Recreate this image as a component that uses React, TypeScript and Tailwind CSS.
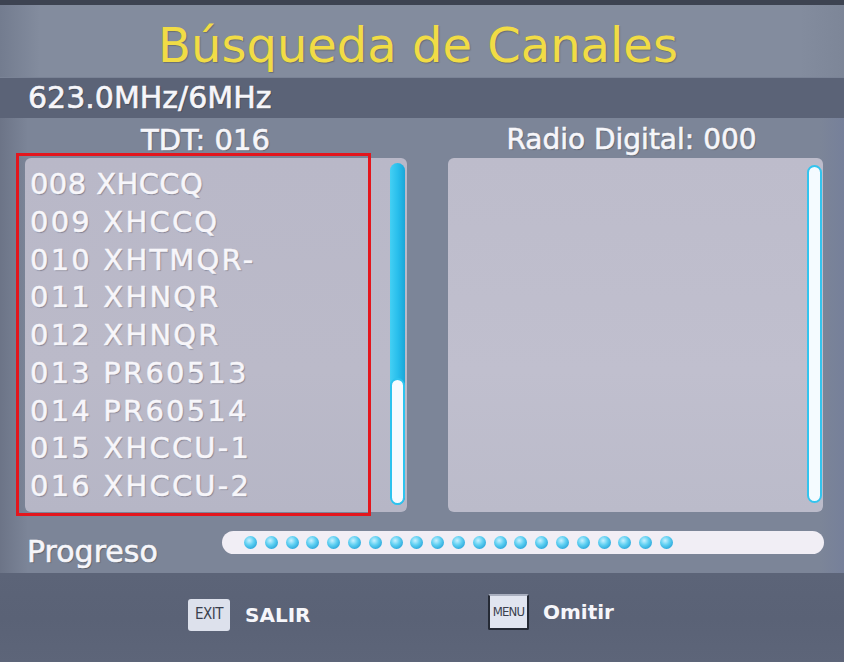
import React from "react";

const rows: { t: string; tight?: boolean }[] = [
  { t: "008 XHCCQ", tight: true },
  { t: "009 XHCCQ" },
  { t: "010 XHTMQR-" },
  { t: "011 XHNQR" },
  { t: "012 XHNQR" },
  { t: "013 PR60513" },
  { t: "014 PR60514" },
  { t: "015 XHCCU-1" },
  { t: "016 XHCCU-2" },
];

const dots = Array.from({ length: 21 }, (_, i) => i);

export default function App() {
  return (
    <div
      className="relative w-[844px] h-[662px] overflow-hidden flex flex-col bg-[#7c8598] text-white"
      style={{ fontFamily: '"DejaVu Sans", "Liberation Sans", sans-serif' }}
    >
      {/* top dark strip */}
      <div className="h-[5px] bg-[#3d4351]" />

      {/* title */}
      <div className="h-[72px] flex justify-center pt-[16px] pr-[8px] bg-[linear-gradient(90deg,#737c8f_0px,#838c9e_40px,#838c9e_800px,#7d8698_844px)]">
        <div className="text-[48px] leading-none text-[#f1dc45] [text-shadow:1px_1px_1px_rgba(60,60,40,0.35)]">
          Búsqueda de Canales
        </div>
      </div>

      <div className="h-[1px] bg-[#7a8396]" />

      {/* frequency bar */}
      <div className="h-[40px] flex items-center pl-[28px] bg-[#5b6377]">
        <div className="text-[30px] leading-none text-[#f6f6fa] [-webkit-text-stroke:0.6px_#f6f6fa] [text-shadow:1px_1px_1px_rgba(0,0,0,0.3)]">
          623.0MHz/6MHz
        </div>
      </div>

      {/* main area */}
      <div className="flex flex-col bg-[linear-gradient(90deg,#6c7487_0px,#7c8598_28px,#7c8598_820px,#76809a_844px)]">
        <div className="grid grid-cols-[382px_375px] gap-x-[41px] pl-[25px]">
          <div className="h-[40px] flex justify-center pt-[8px] pr-[21px]">
            <div className="text-[29px] leading-none text-[#f6f6fa] [-webkit-text-stroke:0.6px_#f6f6fa] [text-shadow:1px_1px_1px_rgba(0,0,0,0.3)]">
              TDT: 016
            </div>
          </div>
          <div className="h-[40px] flex justify-center pt-[8px] pr-[8px]">
            <div className="text-[28px] leading-none text-[#f6f6fa] [-webkit-text-stroke:0.6px_#f6f6fa] [text-shadow:1px_1px_1px_rgba(0,0,0,0.3)]">
              Radio Digital: 000
            </div>
          </div>

          {/* left panel */}
          <div className="h-[354px] rounded-[6px] flex bg-[linear-gradient(180deg,#b9b8c8,#bbbac9_60%,#b6b6c6)]">
            <div className="flex-1 flex flex-col pt-[8px] pl-[5px]">
              {rows.map((r) => (
                <div
                  key={r.t}
                  className={`text-[29px] leading-[37.75px] whitespace-pre text-[#f7f6fa] [-webkit-text-stroke:0.5px_#f7f6fa] [text-shadow:1px_1px_1px_rgba(60,60,80,0.45)] ${
                    r.tight ? "tracking-[0.4px]" : "tracking-[2.2px]"
                  }`}
                >
                  {r.t}
                </div>
              ))}
            </div>
            <div className="pt-[5px] pb-[7px] pr-[2px]">
              <div className="w-[15px] h-full rounded-full overflow-hidden flex flex-col justify-end bg-[linear-gradient(90deg,#45d0f4,#27bdeb_55%,#1aa6d8)]">
                <div className="h-[127px] rounded-full bg-[#f7fbff] border-2 border-[#2ec3ee]" />
              </div>
            </div>
          </div>

          {/* right panel */}
          <div className="h-[354px] rounded-[6px] flex justify-end bg-[linear-gradient(180deg,#bdbccb,#c0bfce_60%,#bbbbca)] pt-[7px] pb-[9px] pr-[1px]">
            <div className="w-[15px] h-full rounded-full bg-[#f4fbff] border-2 border-[#33c4ee]" />
          </div>
        </div>

        {/* progress */}
        <div className="h-[61px] flex items-start pt-[19px] pl-[27px]">
          <div className="w-[195px] pt-[6px] text-[30px] leading-none text-[#f6f6fa] [-webkit-text-stroke:0.6px_#f6f6fa] [text-shadow:1px_1px_1px_rgba(0,0,0,0.3)]">
            Progreso
          </div>
          <div className="w-[602px] h-[23px] rounded-full bg-[#f1eef5] flex items-center pl-[22px] gap-[7.8px]">
            {dots.map((d) => (
              <div
                key={d}
                className="w-[13px] h-[13px] rounded-full bg-[radial-gradient(circle_at_40%_35%,#c9f1ff_0%,#5fd0f2_40%,#229fd6_85%)]"
              />
            ))}
          </div>
        </div>
      </div>

      {/* bottom band */}
      <div className="flex-1 bg-[linear-gradient(180deg,#5c6478,#5a6276_50%,#5d6579)] flex items-center pl-[188px] pb-[6px]">
        <div className="w-[300px] flex items-center gap-[15px]">
          <div
            className="w-[42px] h-[32px] rounded-[3px] bg-[#dde1ec] flex items-center justify-center text-[15px] text-[#3a3f4d] tracking-[-0.5px]"
            style={{ fontFamily: '"DejaVu Sans Condensed", "Liberation Sans Narrow", "DejaVu Sans", sans-serif' }}
          >
            EXIT
          </div>
          <div className="text-[20px] font-bold leading-none text-[#f6f6fa]">SALIR</div>
        </div>
        <div className="flex items-center gap-[14px] -mt-[6px]">
          <div
            className="w-[41px] h-[36px] rounded-[2px] bg-[#e1e5f0] border-2 border-[#252a35] border-t-[#aab0c0] flex items-center justify-center text-[13px] text-[#3a3f4d] tracking-[-0.8px]"
            style={{ fontFamily: '"DejaVu Sans Condensed", "Liberation Sans Narrow", "DejaVu Sans", sans-serif' }}
          >
            MENU
          </div>
          <div className="text-[20px] font-bold leading-none text-[#f6f6fa]">Omitir</div>
        </div>
      </div>

      {/* red annotation box */}
      <div className="absolute left-[16px] top-[153px] w-[355px] h-[363px] border-[3px] border-[#e3161d] pointer-events-none" />
    </div>
  );
}
